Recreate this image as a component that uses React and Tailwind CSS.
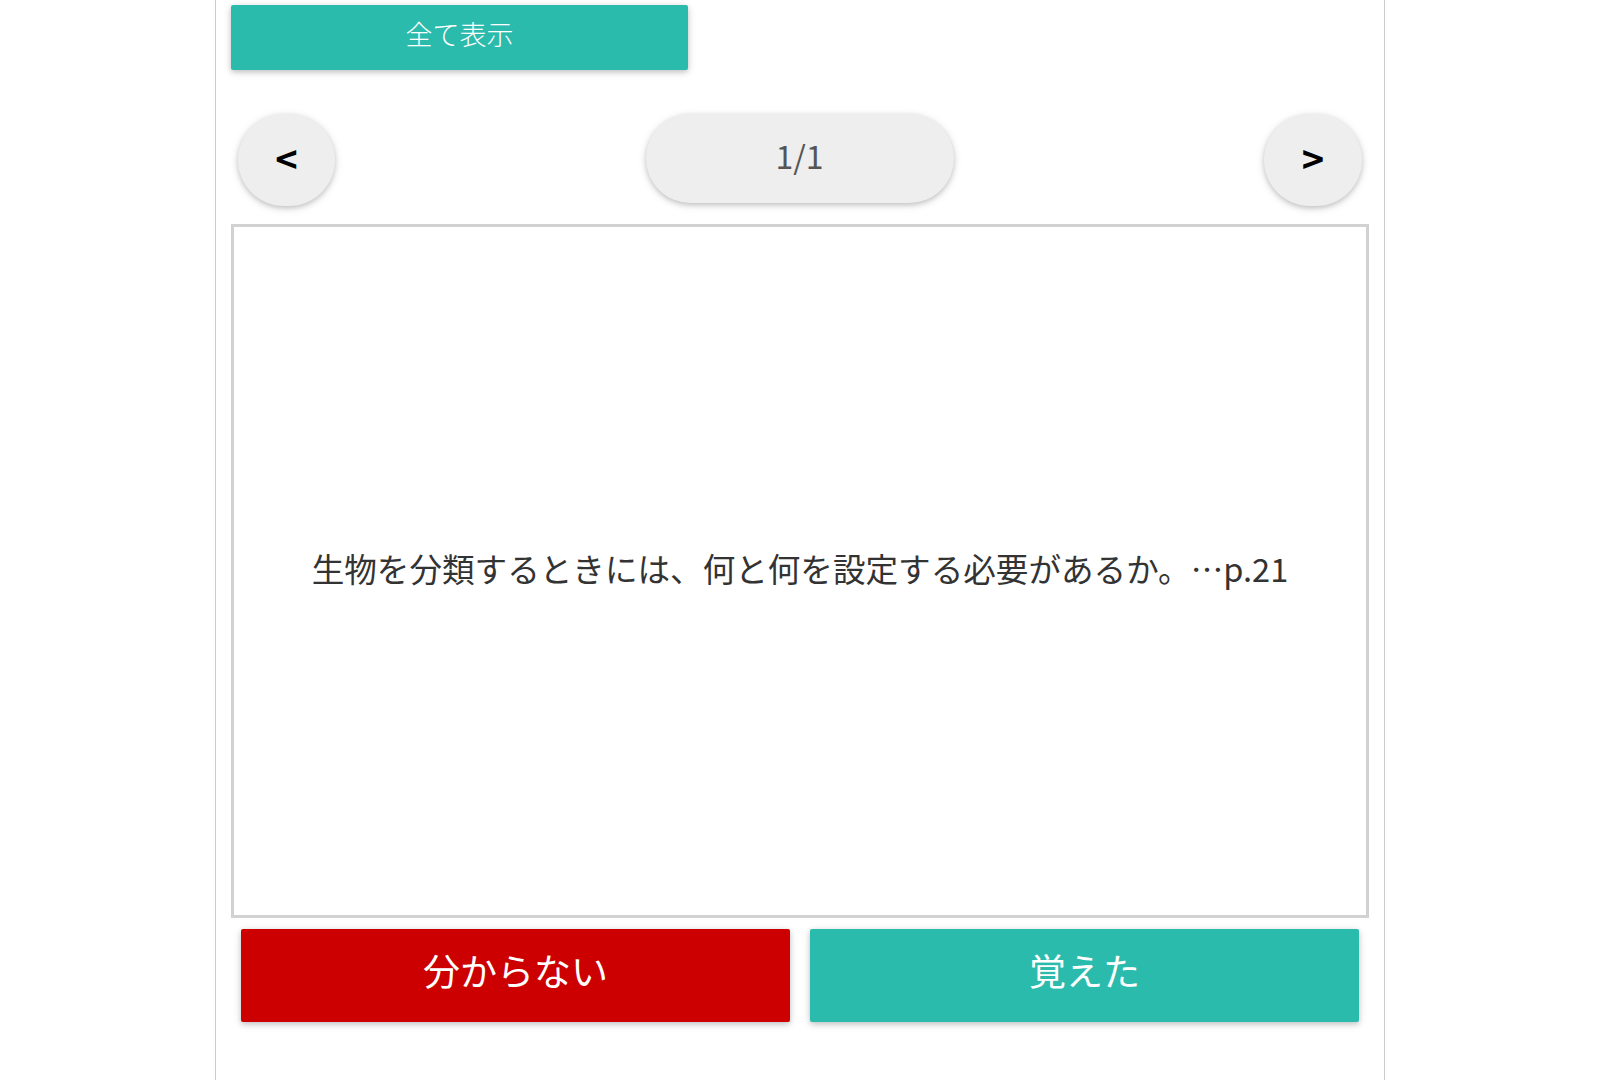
const shadow = "shadow-[0_2px_5px_0_rgba(0,0,0,0.16),0_2px_10px_0_rgba(0,0,0,0.12)]";

export default function App() {
  return (
    <div className="min-h-screen bg-white font-['Noto_Sans_CJK_JP','Noto_Sans',sans-serif]">
      <div className="mx-auto w-[1170px] min-h-screen border-x border-[#cccccc] px-[15px] pt-[5px] pb-10">
        {/* show-all toggle */}
        <button className={`w-[457px] h-[65px] rounded-[2px] bg-[#2bbbad] text-white text-[27px] font-light leading-none pb-[8px] ${shadow}`}>
          全て表示
        </button>

        {/* pager */}
        <div className="mt-[44px] flex items-start justify-between px-[7px]">
          <button className={`w-[97px] h-[92px] rounded-full bg-[#eeeeee] text-black text-[38px] font-semibold leading-none pb-1 ${shadow}`}>
            &lt;
          </button>
          <div className={`w-[308px] h-[89px] rounded-full bg-[#eeeeee] flex items-center justify-center text-[#555555] text-[32px] leading-none pb-[8px] ${shadow}`}>
            1/1
          </div>
          <button className={`w-[98px] h-[92px] rounded-full bg-[#eeeeee] text-black text-[38px] font-semibold leading-none pb-1 ${shadow}`}>
            &gt;
          </button>
        </div>

        {/* question card */}
        <div className="mt-[18px] h-[694px] border-[3px] border-[#d2d2d2] flex items-center justify-center px-6 pb-[6px]">
          <p className="text-[#333333] text-[32.6px] leading-none text-center">
            生物を分類するときには、何と何を設定する必要があるか。…p.21
          </p>
        </div>

        {/* answer buttons */}
        <div className="mt-[11px] grid grid-cols-2 gap-5 px-[10px]">
          <button className={`h-[93px] rounded-[2px] bg-[#cc0000] text-white text-[37px] leading-none pb-[10px] ${shadow}`}>
            分からない
          </button>
          <button className={`h-[93px] rounded-[2px] bg-[#2bbbad] text-white text-[37px] leading-none pb-[10px] ${shadow}`}>
            覚えた
          </button>
        </div>
      </div>
    </div>
  );
}
